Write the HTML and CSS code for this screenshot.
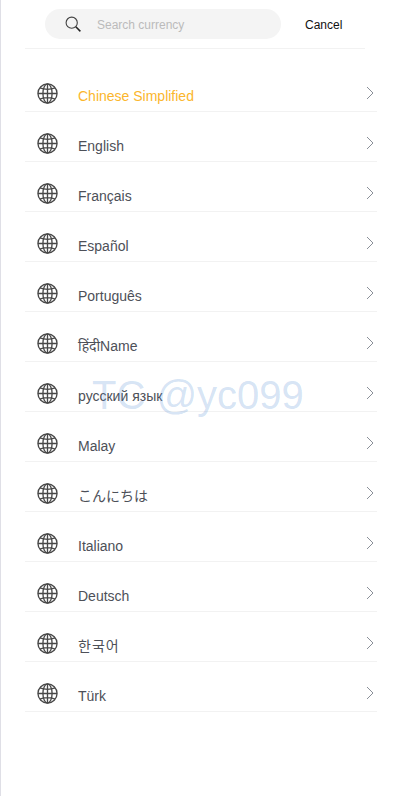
FILE: index.html

```html
<!DOCTYPE html>
<html>
<head>
    <meta charset="utf-8">
    <title>Language</title>
    <link rel="stylesheet" href="styles.css">
</head>
<body>
    <svg class="defs" width="0" height="0">
        <symbol id="globe" viewBox="0 0 22 22">
            <g fill="none" stroke="#484848" stroke-width="1.4">
                <circle cx="11" cy="11" r="10"/>
                <ellipse cx="11" cy="11" rx="4.8" ry="10"/>
                <path d="M11 1V21M1 11H21M3 5.2Q11 8.2 19 5.2M3 16.8Q11 13.8 19 16.8"/>
            </g>
        </symbol>
        <symbol id="arrow" viewBox="0 0 8 14">
            <path d="M1 1L7 7L1 13" fill="none" stroke="#8a8f98" stroke-width="1"/>
        </symbol>
    </svg>

    <div class="page">
        <div class="search-bar">
            <div class="search-box">
                <svg class="search-icon" viewBox="0 0 16 16">
                    <circle cx="6.7" cy="6.7" r="5.6" fill="none" stroke="#444" stroke-width="1.1"/>
                    <path d="M10.8 10.8L15.4 15.4" fill="none" stroke="#222" stroke-width="1.5"/>
                </svg>
                <span class="placeholder">Search currency</span>
            </div>
            <span class="cancel">Cancel</span>
        </div>

        <ul class="lang-list">
            <li class="lang-row active"><svg class="globe"><use href="#globe"/></svg><span class="lang-name">Chinese Simplified</span><svg class="arrow"><use href="#arrow"/></svg></li>
            <li class="lang-row"><svg class="globe"><use href="#globe"/></svg><span class="lang-name">English</span><svg class="arrow"><use href="#arrow"/></svg></li>
            <li class="lang-row"><svg class="globe"><use href="#globe"/></svg><span class="lang-name">Français</span><svg class="arrow"><use href="#arrow"/></svg></li>
            <li class="lang-row"><svg class="globe"><use href="#globe"/></svg><span class="lang-name">Español</span><svg class="arrow"><use href="#arrow"/></svg></li>
            <li class="lang-row"><svg class="globe"><use href="#globe"/></svg><span class="lang-name">Português</span><svg class="arrow"><use href="#arrow"/></svg></li>
            <li class="lang-row"><svg class="globe"><use href="#globe"/></svg><span class="lang-name">हिंदीName</span><svg class="arrow"><use href="#arrow"/></svg></li>
            <li class="lang-row"><svg class="globe"><use href="#globe"/></svg><span class="lang-name">русский язык</span><svg class="arrow"><use href="#arrow"/></svg></li>
            <li class="lang-row"><svg class="globe"><use href="#globe"/></svg><span class="lang-name">Malay</span><svg class="arrow"><use href="#arrow"/></svg></li>
            <li class="lang-row"><svg class="globe"><use href="#globe"/></svg><span class="lang-name">こんにちは</span><svg class="arrow"><use href="#arrow"/></svg></li>
            <li class="lang-row"><svg class="globe"><use href="#globe"/></svg><span class="lang-name">Italiano</span><svg class="arrow"><use href="#arrow"/></svg></li>
            <li class="lang-row"><svg class="globe"><use href="#globe"/></svg><span class="lang-name">Deutsch</span><svg class="arrow"><use href="#arrow"/></svg></li>
            <li class="lang-row"><svg class="globe"><use href="#globe"/></svg><span class="lang-name wide">한국어</span><svg class="arrow"><use href="#arrow"/></svg></li>
            <li class="lang-row"><svg class="globe"><use href="#globe"/></svg><span class="lang-name">Türk</span><svg class="arrow"><use href="#arrow"/></svg></li>
        </ul>
    </div>

    <div class="watermark">TC @yc099</div>
</body>
</html>
```

FILE: styles.css

```css
html, body {
    margin: 0;
    padding: 0;
    height: 100%;
    background: #fff;
    overflow: hidden;
}
body {
    font-family: "Liberation Sans", "Noto Sans", "Noto Sans CJK JP", sans-serif;
    color: #4d5058;
    position: relative;
}
.defs {
    position: absolute;
}
.page {
    height: 796px;
    box-sizing: border-box;
    border-left: 1px solid #dfdfe6;
    padding-left: 24px;
}
.search-bar {
    width: 340px;
    height: 48px;
    border-bottom: 1px solid #f2f2f2;
    display: flex;
    align-items: flex-start;
}
.search-box {
    width: 236px;
    height: 30px;
    margin: 9px 0 0 20px;
    background: #f4f4f4;
    border-radius: 15px;
    display: flex;
    align-items: center;
}
.search-icon {
    width: 16px;
    height: 16px;
    margin-left: 20px;
}
.placeholder {
    margin: 1px 0 0 16px;
    font-size: 12px;
    color: #bbb;
}
.cancel {
    margin: 10px 0 0 24px;
    line-height: 30px;
    font-size: 12px;
    color: #111;
}
.lang-list {
    list-style: none;
    margin: 13px 0 0;
    padding: 0;
    width: 352px;
}
.lang-row {
    height: 50px;
    box-sizing: border-box;
    border-bottom: 1px solid #f2f2f2;
    display: flex;
    align-items: flex-start;
}
.globe {
    width: 21px;
    height: 21px;
    margin: 21px 0 0 12px;
    flex: none;
}
.lang-name {
    margin: 26px 0 0 20px;
    font-size: 14px;
    line-height: 16px;
    flex: 1;
}
.wide {
    letter-spacing: 1px;
}
.arrow {
    width: 8px;
    height: 14px;
    margin: 24px 3px 0 0;
    flex: none;
}
.active .lang-name {
    color: #fbb62c;
}
.watermark {
    position: absolute;
    left: 92px;
    top: 372px;
    font-size: 40px;
    line-height: 46px;
    color: rgba(80, 140, 210, 0.24);
    white-space: nowrap;
}
```
